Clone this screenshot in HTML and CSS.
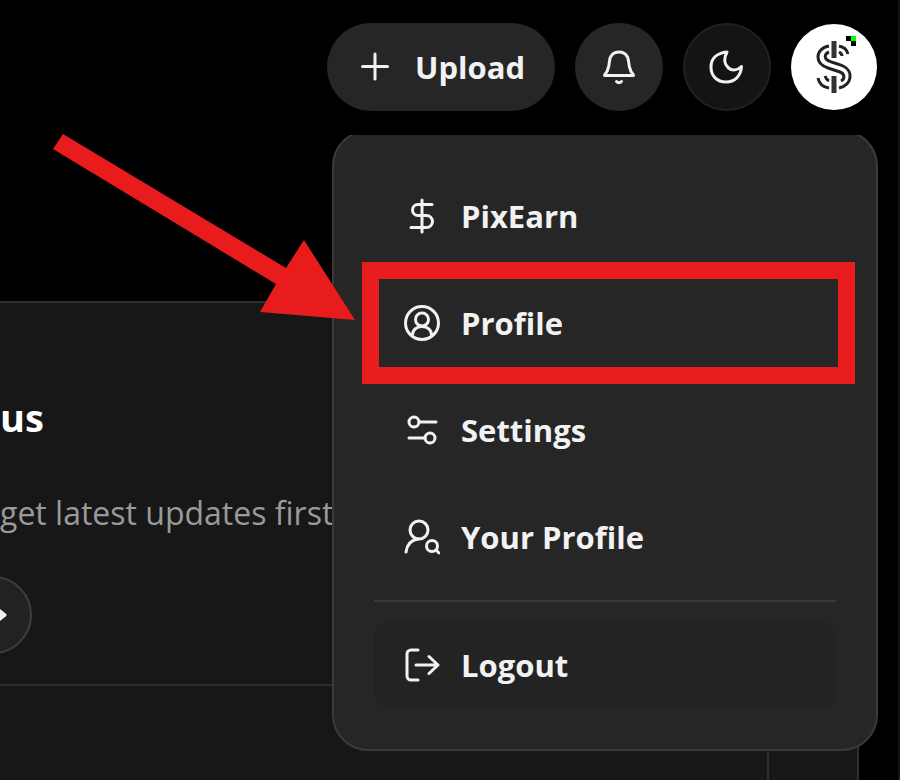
FILE: index.html
```
<!DOCTYPE html>
<html lang="en">
<head>
    <meta charset="UTF-8">
    <meta name="viewport" content="width=device-width, initial-scale=1.0">
    <title>Profile Menu</title>
    <link rel="stylesheet" href="styles.css">
</head>
<body>
    <header class="topbar">
        <button type="button" class="upload-btn">
            <svg class="icon" viewBox="0 0 36 36"><path d="M18 5v25M5.500 17.500h25"/></svg>
            Upload
        </button>
        <button type="button" class="round-btn" aria-label="Notifications">
            <svg class="icon" viewBox="0 0 36 36"><path d="M18 3c-6 0-9 4-9.500 9-.3 5-.8 7-2.500 10.500C4.500 25 3 26 3.500 26.500h29c.5-.5-1-1.500-2.500-4-1.700-3.500-2.200-5.500-2.500-10.500C27 7 24 3 18 3z"/><path d="M15.500 32.500c1.500 1.500 3.500 1.500 5 0"/></svg>
        </button>
        <button type="button" class="round-btn theme-btn" aria-label="Toggle theme">
            <svg class="icon" viewBox="0 0 36 36"><path d="M18 3C8 4 2 9.500 2 18c0 9 6 15 15 15 8.500 0 15-6 15.500-15.500-4 4-9.500 4.500-13 1.500-4.500-4-5-9.500-1.500-16z"/></svg>
        </button>
        <button type="button" class="avatar-btn" aria-label="Account">
            <svg class="avatar" viewBox="0 0 86 86">
                <path class="coin" d="M38 22C31 23 27 28 27 33c0 6 4 9 10 11l12 4c5 2 5 7 1 9M38 28c-5 2-5 7 0 9 4 2 10 3 14 5 11 5 9 19-4 22M48 22c5 1 8 4 9 8M48 28c2 1 3 2 3 4M27 54c1 6 5 9 11 10M34 52c1 3 2 4 4 5"/>
                <path class="bar" d="M43 17v17M43 52v17"/>
                <path d="M55 12h5v5h-5zM60 17h5v5h-5z"/>
                <path class="online" d="M60 12h5v5h-5z"/>
            </svg>
        </button>
    </header>

    <main class="page">
        <section class="card">
            <div class="card-body">
                <h2>us</h2>
                <p>get latest updates first</p>
                <button type="button" class="next-btn" aria-label="Next">
                    <svg class="icon" viewBox="0 0 36 36"><path d="M3 18h27M25 13l6 5-6 5z"/></svg>
                </button>
            </div>
            <div class="card-footer">
                <div class="footer-main"></div>
                <div class="footer-side"></div>
            </div>
        </section>
    </main>

    <!-- Account menu -->
    <div class="menu-wrap">
        <nav class="menu">
            <a href="#" class="menu-item">
                <svg class="icon" viewBox="0 0 36 36"><path d="M18 2v32M28 6.500H14a5.500 5.500 0 0 0 0 11h8.500a6 6 0 0 1 0 12H7"/></svg>
                PixEarn
            </a>
            <a href="#" class="menu-item active">
                <svg class="icon" viewBox="0 0 36 36"><circle cx="18" cy="18" r="16.500"/><circle cx="18" cy="14.500" r="6.500"/><path d="M8.500 30c0-5 4-8.500 9.500-8.500s9.500 3.500 9.500 8.500"/></svg>
                Profile
            </a>
            <a href="#" class="menu-item">
                <svg class="icon" viewBox="0 0 36 36"><circle cx="10" cy="10" r="5"/><path d="M15 10h17M5 26h16"/><circle cx="26" cy="26" r="5"/></svg>
                Settings
            </a>
            <a href="#" class="menu-item">
                <svg class="icon" viewBox="0 0 36 36"><circle cx="15" cy="11" r="9"/><path d="M2 33c1-8 6-12 12-13M32 31l3 3"/><circle cx="28" cy="27" r="5.500"/></svg>
                Your Profile
            </a>
            <hr>
            <button type="button" class="menu-item logout">
                <svg class="icon" viewBox="0 0 36 36"><path d="M14 3H7a4 4 0 0 0-4 4v22a4 4 0 0 0 4 4h7M12 18h22M25 9.500l9 8.500-9 8.500"/></svg>
                Logout
            </button>
        </nav>
    </div>

    <!-- Pointer to the Profile entry -->
    <svg class="pointer" viewBox="0 0 302 187"><path d="M10 0L233 134 251 106 302 186 207 178 223 150 0 15z"/></svg>
</body>
</html>
```

FILE: styles.css
```
* {
    box-sizing: border-box;
}
body {
    position: relative;
    display: flex;
    flex-direction: column;
    min-height: 100vh;
    margin: 0;
    overflow-x: hidden;
    border-right: 2px solid #141414;
    background-color: #000;
    color: #f2f2f2;
    font-family: "Open Sans", "Noto Sans", sans-serif;
    font-size: 31px;
    line-height: 40px;
}
button {
    border: none;
    color: inherit;
    font: inherit;
    cursor: pointer;
}
.icon {
    flex: none;
    width: 36px;
    height: 36px;
    fill: none;
    stroke: currentColor;
    stroke-width: 3;
    stroke-linecap: round;
    stroke-linejoin: round;
}

/* Top bar */
.topbar {
    display: flex;
    justify-content: flex-end;
    align-items: center;
    gap: 20px;
    height: 134px;
    padding-right: 21px;
}
.upload-btn {
    display: flex;
    align-items: center;
    gap: 22px;
    height: 88px;
    padding: 0 30px;
    border-radius: 44px;
    background-color: #262626;
    font-weight: 700;
}
.round-btn {
    display: grid;
    place-items: center;
    width: 88px;
    height: 88px;
    padding: 0;
    border-radius: 50%;
    background-color: #262626;
}
.theme-btn {
    border: 2px solid #202020;
    background-color: #141414;
}
.avatar-btn {
    width: 86px;
    height: 86px;
    padding: 0;
    border-radius: 50%;
    background-color: #fff;
}
.avatar {
    display: block;
}
.coin {
    fill: none;
    stroke: #222;
    stroke-width: 3;
}
.bar {
    stroke: #333;
    stroke-width: 5;
}
.online {
    fill: #0f0;
}

/* Page card */
.page {
    display: flex;
    flex: 1;
    padding: 167px 39px 0 0;
}
.card {
    display: flex;
    flex: 1;
    flex-direction: column;
    border: 2px solid #2e2e2e;
    border-width: 2px 2px 0 0;
    background-color: #171717;
}
.card-body {
    height: 381px;
    padding-top: 90px;
}
.card h2 {
    margin: 0 0 52px;
    color: #fff;
    font-size: 38px;
    line-height: 48px;
}
.card p {
    margin: 0 0 43px;
    color: #9a9a9a;
    font-size: 32px;
}
.next-btn {
    display: flex;
    justify-content: flex-end;
    align-items: center;
    width: 78px;
    height: 78px;
    margin-left: -46px;
    padding: 0 20px;
    border: 2px solid #3d3d3d;
    border-radius: 50%;
    background-color: #222;
}
.card-footer {
    display: flex;
    flex: 1;
    border-top: 2px solid #2e2e2e;
}
.footer-main {
    flex: 1;
    border-right: 2px solid #2e2e2e;
}
.footer-side {
    width: 88px;
}

/* Account menu */
.menu-wrap {
    position: absolute;
    top: 135px;
    right: 20px;
    width: 546px;
    overflow: hidden;
}
.menu {
    display: flex;
    flex-direction: column;
    gap: 19px;
    margin-top: -5px;
    padding: 40px;
    border: 2px solid #3a3a3a;
    border-radius: 36px;
    background-color: #262626;
}
.menu-item {
    position: relative;
    display: flex;
    align-items: center;
    gap: 21px;
    height: 88px;
    padding: 0 30px;
    border-radius: 16px;
    color: inherit;
    font-weight: 700;
    text-decoration: none;
}
.menu hr {
    width: 100%;
    height: 2px;
    margin: 0;
    border: none;
    background-color: #3a3a3a;
}
.logout {
    background-color: #232323;
}

/* Highlight */
.active::after {
    content: "";
    position: absolute;
    inset: -17px -19px -17px -12px;
    border: 17px solid #e81c1c;
}
.pointer {
    position: absolute;
    top: 134px;
    left: 53px;
    width: 302px;
    fill: #e81c1c;
}
```
